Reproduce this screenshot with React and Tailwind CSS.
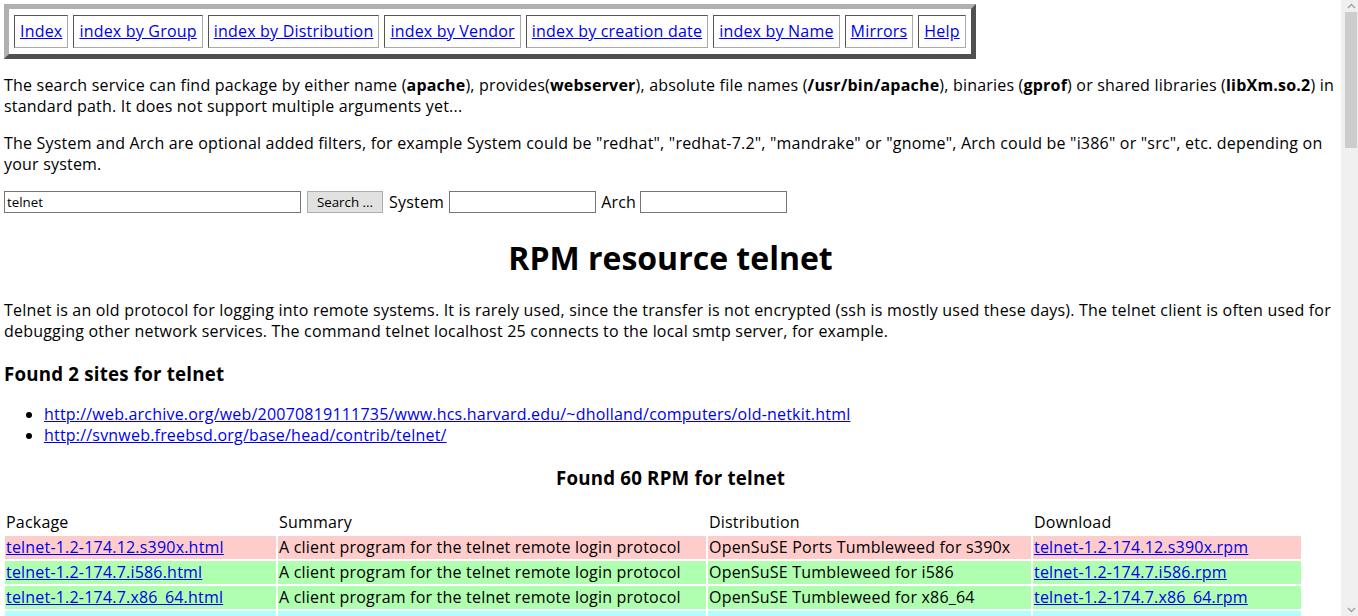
const navLinks = [
  'Index',
  'index by Group',
  'index by Distribution',
  'index by Vendor',
  'index by creation date',
  'index by Name',
  'Mirrors',
  'Help',
];

const rows = [
  { pkg: 'telnet-1.2-174.12.s390x', dist: 'OpenSuSE Ports Tumbleweed for s390x', color: 'bg-[#ffcccc]' },
  { pkg: 'telnet-1.2-174.7.i586', dist: 'OpenSuSE Tumbleweed for i586', color: 'bg-[#b0ffb0]' },
  { pkg: 'telnet-1.2-174.7.x86_64', dist: 'OpenSuSE Tumbleweed for x86_64', color: 'bg-[#b0ffb0]' },
  { pkg: 'telnet-1.2-174.5.aarch64', dist: 'OpenSuSE Ports Tumbleweed for aarch64', color: 'bg-[#b0ffff]' },
  { pkg: 'telnet-1.2-174.5.ppc64le', dist: 'OpenSuSE Ports Tumbleweed for ppc64le', color: 'bg-[#b0ffff]' },
  { pkg: 'telnet-1.2-174.5.ppc64', dist: 'OpenSuSE Ports Tumbleweed for ppc64', color: 'bg-[#b0ffff]' },
  { pkg: 'telnet-1.2-171.10.x86_64', dist: 'OpenSuSE Leap 15.5 for x86_64', color: 'bg-[#b0ffb0]' },
  { pkg: 'telnet-1.2-171.10.aarch64', dist: 'OpenSuSE Ports Leap 15.5 for aarch64', color: 'bg-[#ffcccc]' },
];

const inputCls = 'h-[22px] border border-[#767676] bg-white px-[2px] text-[13.33px] tracking-normal outline-none';

function Scrollbar() {
  return (
    <div className="flex h-screen w-[17px] shrink-0 flex-col bg-[#f0f0f0]">
      <div className="flex h-[12px] items-center justify-center pl-[3px]">
        <svg width="9" height="6" viewBox="0 0 9 6">
          <polyline points="1,5 4.5,1.5 8,5" fill="none" stroke="#a0a0a0" strokeWidth="1.4" />
        </svg>
      </div>
      <div className="ml-[4px] mr-[1px] h-[136px] bg-[#cdcdcd]" />
      <div className="flex-1" />
      <div className="flex h-[12px] items-center justify-center pl-[3px]">
        <svg width="9" height="6" viewBox="0 0 9 6">
          <polyline points="1,1 4.5,4.5 8,1" fill="none" stroke="#a0a0a0" strokeWidth="1.4" />
        </svg>
      </div>
    </div>
  );
}

export default function App() {
  return (
    <div
      className="flex h-screen overflow-hidden bg-white text-black text-[16px] leading-[21px] tracking-[0.2px]"
      style={{ fontFamily: '"Open Sans", "Noto Sans", sans-serif' }}
    >
      <div className="min-w-0 flex-1 px-[4px] pt-[4px] pb-8">
        {/* nav box */}
        <div className="inline-flex gap-[5px] px-[5px] pt-[6px] pb-[6px] border-[5px] border-t-[#b0b0b0] border-l-[#b0b0b0] border-b-[#505050] border-r-[#505050]">
          {navLinks.map((l) => (
            <div
              key={l}
              className="p-[5px] border border-t-[#555] border-l-[#555] border-b-[#aaa] border-r-[#aaa]"
            >
              <a href="#" className="text-[#0000ee] underline">
                {l}
              </a>
            </div>
          ))}
        </div>

        <p className="mt-4">
          The search service can find package by either name (<b>apache</b>), provides(<b>webserver</b>),
          absolute file names (<b>/usr/bin/apache</b>), binaries (<b>gprof</b>) or shared libraries (
          <b>libXm.so.2</b>) in standard path. It does not support multiple arguments yet...
        </p>
        <p className="mt-4">
          The System and Arch are optional added filters, for example System could be "redhat",
          "redhat-7.2", "mandrake" or "gnome", Arch could be "i386" or "src", etc. depending on your
          system.
        </p>

        <form className="mt-4 flex items-center" onSubmit={(e) => e.preventDefault()}>
          <input defaultValue="telnet" className={`${inputCls} w-[297px] border-[#222]`} />
          <button
            type="button"
            className="ml-[6px] h-[22px] w-[76px] border border-[#adadad] bg-[#e1e1e1] text-[13.33px] tracking-normal"
          >
            Search ...
          </button>
          <span className="ml-[6px]">System</span>
          <input className={`${inputCls} ml-[5px] w-[147px]`} />
          <span className="ml-[5px]">Arch</span>
          <input className={`${inputCls} ml-[4px] w-[147px]`} />
        </form>

        <h1 className="mt-[24px] text-center text-[32px] leading-[42px] font-bold tracking-normal">
          RPM resource telnet
        </h1>

        <p className="mt-[21px]">
          Telnet is an old protocol for logging into remote systems. It is rarely used, since the transfer
          is not encrypted (ssh is mostly used these days). The telnet client is often used for debugging
          other network services. The command telnet localhost 25 connects to the local smtp server, for
          example.
        </p>

        <h3 className="mt-[19px] text-[18.72px] leading-[25px] font-bold">Found 2 sites for telnet</h3>
        <ul className="mt-[18px] list-disc pl-10">
          <li>
            <a href="#" className="text-[#0000ee] underline">
              http://web.archive.org/web/20070819111735/www.hcs.harvard.edu/~dholland/computers/old-netkit.html
            </a>
          </li>
          <li>
            <a href="#" className="text-[#0000ee] underline">
              http://svnweb.freebsd.org/base/head/contrib/telnet/
            </a>
          </li>
        </ul>

        <h3 className="mt-[19px] text-center text-[18.72px] leading-[25px] font-bold">Found 60 RPM for telnet</h3>

        <table className="mt-[19px] -ml-[1px] border-separate border-spacing-[2px]">
          <thead>
            <tr>
              <th className="w-[271px] p-[1px] text-left font-normal">Package</th>
              <th className="w-[428px] p-[1px] text-left font-normal">Summary</th>
              <th className="w-[323px] p-[1px] text-left font-normal">Distribution</th>
              <th className="w-[268px] p-[1px] text-left font-normal">Download</th>
            </tr>
          </thead>
          <tbody>
            {rows.map((r) => (
              <tr key={r.pkg} className={r.color}>
                <td className="p-[1px]">
                  <a href="#" className="text-[#0000ee] underline">
                    {r.pkg}.html
                  </a>
                </td>
                <td className="p-[1px]">A client program for the telnet remote login protocol</td>
                <td className="p-[1px]">{r.dist}</td>
                <td className="p-[1px]">
                  <a href="#" className="text-[#0000ee] underline">
                    {r.pkg}.rpm
                  </a>
                </td>
              </tr>
            ))}
          </tbody>
        </table>
      </div>
      <Scrollbar />
    </div>
  );
}
